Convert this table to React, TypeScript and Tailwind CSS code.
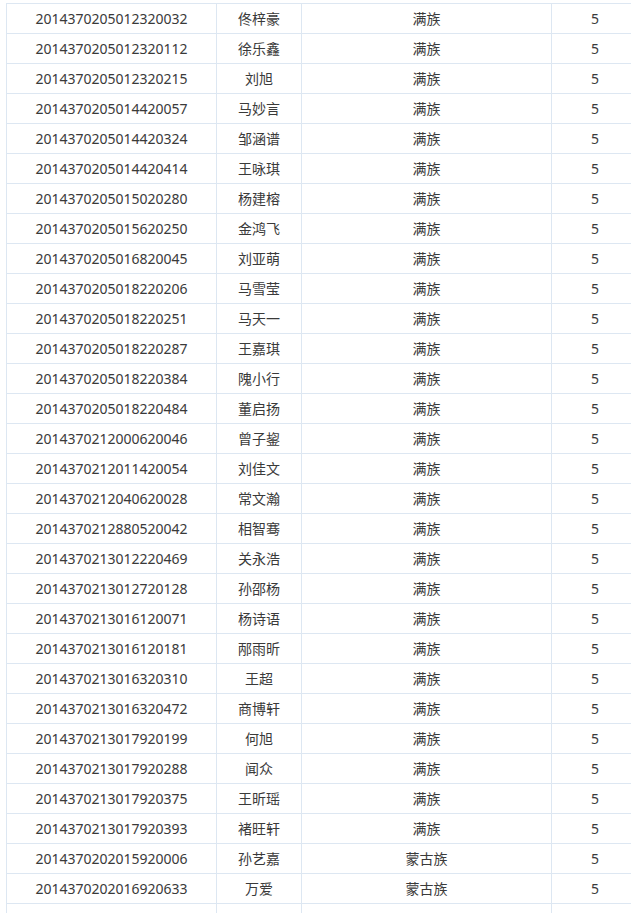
const rows: [string, string, string][] = [
  ["2014370205012320032", "佟梓豪", "满族"],
  ["2014370205012320112", "徐乐鑫", "满族"],
  ["2014370205012320215", "刘旭", "满族"],
  ["2014370205014420057", "马妙言", "满族"],
  ["2014370205014420324", "邹涵谱", "满族"],
  ["2014370205014420414", "王咏琪", "满族"],
  ["2014370205015020280", "杨建榕", "满族"],
  ["2014370205015620250", "金鸿飞", "满族"],
  ["2014370205016820045", "刘亚萌", "满族"],
  ["2014370205018220206", "马雪莹", "满族"],
  ["2014370205018220251", "马天一", "满族"],
  ["2014370205018220287", "王嘉琪", "满族"],
  ["2014370205018220384", "隗小行", "满族"],
  ["2014370205018220484", "董启扬", "满族"],
  ["2014370212000620046", "曾子鋆", "满族"],
  ["2014370212011420054", "刘佳文", "满族"],
  ["2014370212040620028", "常文瀚", "满族"],
  ["2014370212880520042", "相智骞", "满族"],
  ["2014370213012220469", "关永浩", "满族"],
  ["2014370213012720128", "孙邵杨", "满族"],
  ["2014370213016120071", "杨诗语", "满族"],
  ["2014370213016120181", "邴雨昕", "满族"],
  ["2014370213016320310", "王超", "满族"],
  ["2014370213016320472", "商博轩", "满族"],
  ["2014370213017920199", "何旭", "满族"],
  ["2014370213017920288", "闻众", "满族"],
  ["2014370213017920375", "王昕瑶", "满族"],
  ["2014370213017920393", "褚旺轩", "满族"],
  ["2014370202015920006", "孙艺嘉", "蒙古族"],
  ["2014370202016920633", "万爱", "蒙古族"],
];

export default function App() {
  return (
    <div className="w-[631px] h-[913px] overflow-hidden bg-white">
      <div className="pl-[6px] pt-[3px]">
        <table
          className="border-collapse table-fixed w-[632px] text-[14px] text-[#3a3a3a]"
          style={{ fontFamily: '"Noto Sans", "Noto Sans CJK SC", sans-serif' }}
        >
          <colgroup>
            <col className="w-[210px]" />
            <col className="w-[85px]" />
            <col className="w-[250px]" />
            <col className="w-[87px]" />
          </colgroup>
          <tbody>
            {rows.map((r, i) => (
              <tr key={i} className="h-[30px]">
                <td className="border border-[#dde7f2] text-center p-0 leading-[29px]">{r[0]}</td>
                <td className="border border-[#dde7f2] text-center p-0 leading-[29px]">{r[1]}</td>
                <td className="border border-[#dde7f2] text-center p-0 leading-[29px]">{r[2]}</td>
                <td className="border border-[#dde7f2] text-center p-0 leading-[29px]">5</td>
              </tr>
            ))}
            <tr className="h-[30px]">
              <td className="border border-[#dde7f2]"></td>
              <td className="border border-[#dde7f2]"></td>
              <td className="border border-[#dde7f2]"></td>
              <td className="border border-[#dde7f2]"></td>
            </tr>
          </tbody>
        </table>
      </div>
    </div>
  );
}
